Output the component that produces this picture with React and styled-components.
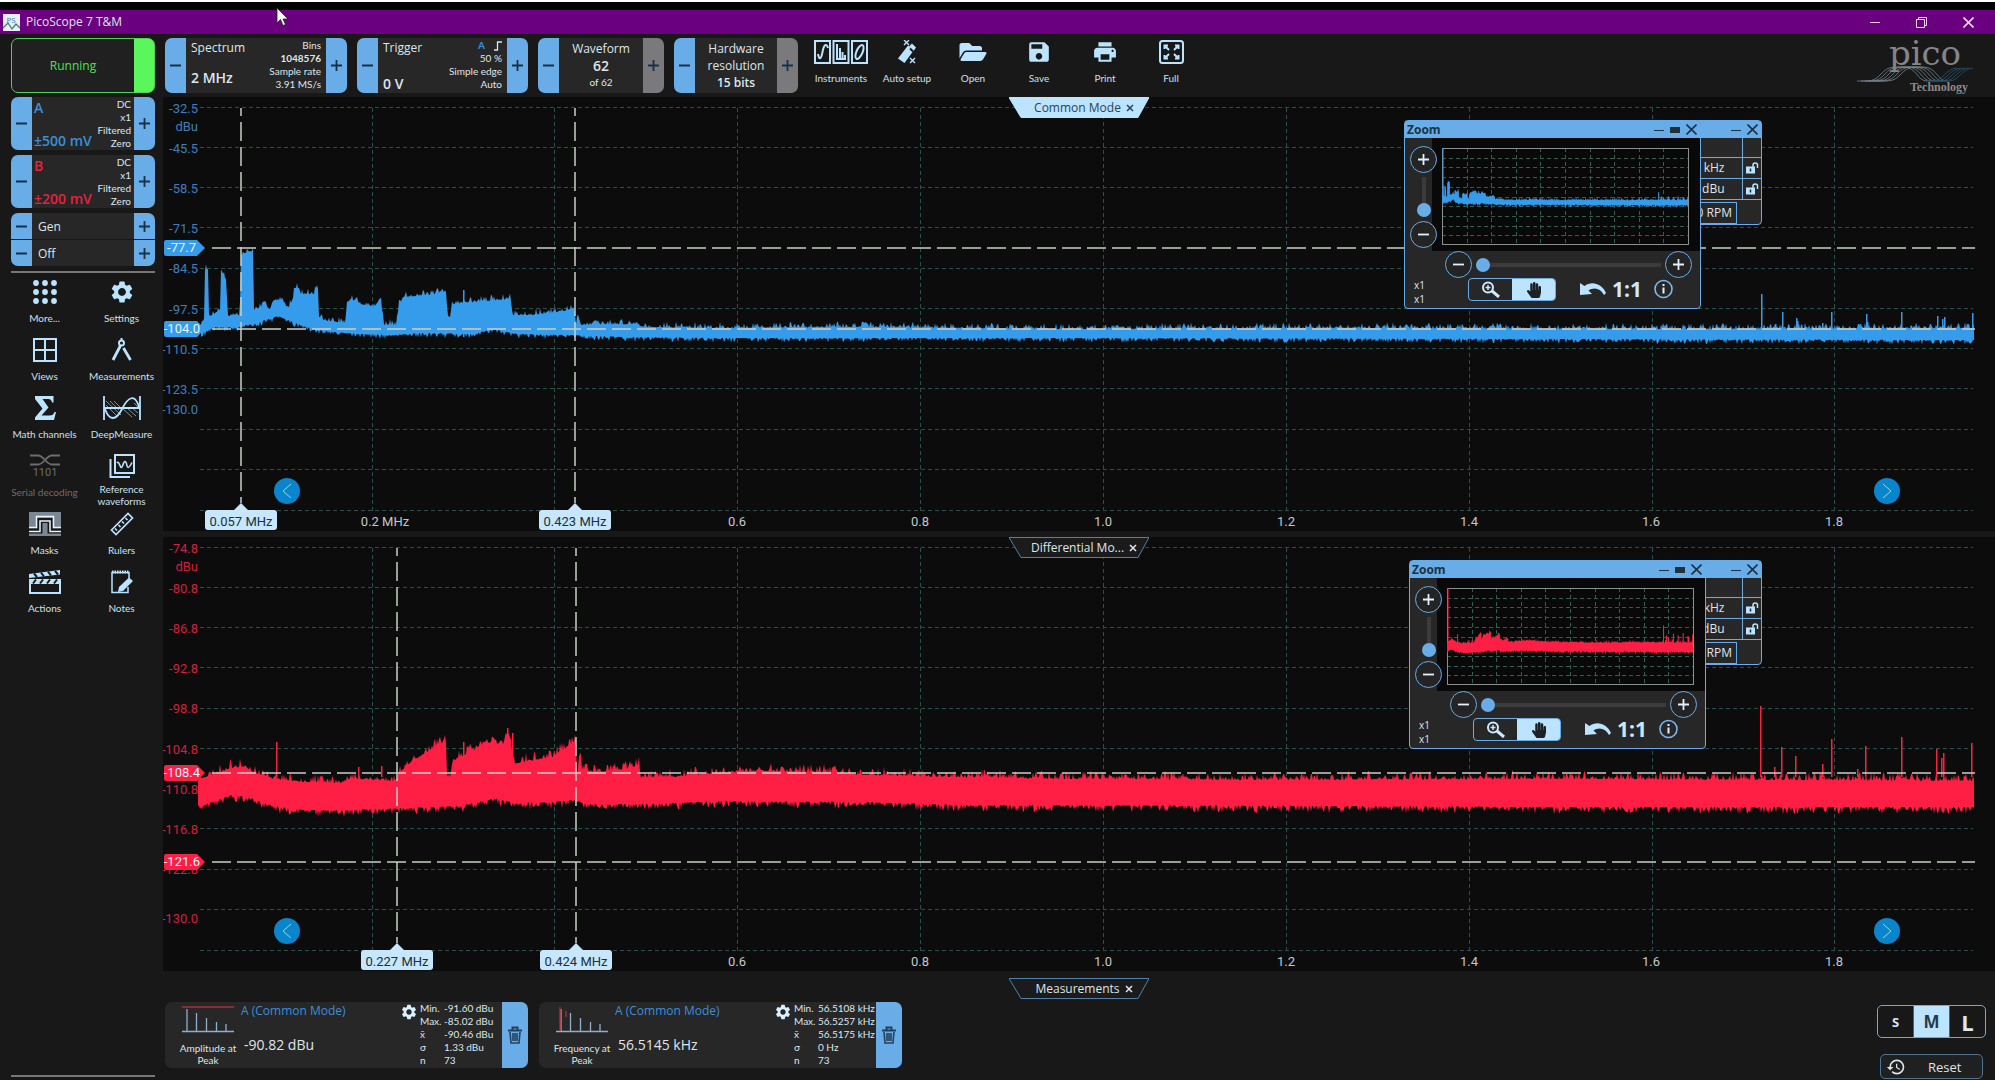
import React, { useState } from 'react';
import styled, { createGlobalStyle, css } from 'styled-components';
import { FaFolderOpen, FaHandPaper } from 'react-icons/fa';
import { MdHistory, MdPrint, MdSave, MdSettings } from 'react-icons/md';

const BLUE = '#349ceb';
const RED = '#ff1f45';

const GlobalStyle = createGlobalStyle`
  :root {
    --bg: #181818;
    --card: #272727;
    --plot: #0c0c0c;
    --accent: #69ade8;
    --pale: #bce4ff;
    --text: #dfe6ec;
    --font-ui: 'Open Sans', 'Noto Sans', sans-serif;
    --font-small: Lato, 'Open Sans', sans-serif;
    --fz-xs: 10px;
    --fz-md: 12px;
    --fz-lg: 14px;
  }

  * {
    box-sizing: border-box;
  }

  body {
    margin: 0;
    background: var(--bg);
    color: var(--text);
    font-family: var(--font-ui);
    font-size: var(--fz-md);
    line-height: 16px;
  }

  button {
    padding: 0;
    border: 0;
    background: none;
    color: inherit;
    font: inherit;
  }

  svg {
    display: block;
  }
`;

/* ---------- trace data ---------- */

// [x, y] pairs in plot units, the plot being 1832 x 434
const upperA = [
  [38, 227], [41, 222], [42, 173], [45, 173], [46, 220], [57, 213], [58, 173], [63, 183],
  [65, 219], [76, 218], [77, 210], [78, 158], [83, 156], [90, 154], [91, 213], [101, 209],
  [107, 212], [110, 204], [120, 204], [125, 212], [130, 202], [131, 191], [136, 191],
  [138, 197], [151, 197], [153, 191], [155, 192], [156, 223], [182, 226], [184, 208],
  [188, 202], [197, 207], [211, 210], [218, 201], [219, 213], [221, 228], [233, 228],
  [236, 208], [241, 200], [268, 198], [282, 195], [283, 197], [285, 220], [287, 220],
  [289, 207], [311, 205], [347, 202], [348, 204], [349, 218], [368, 218], [390, 216],
  [411, 212], [413, 228], [415, 218], [418, 228], [476, 227], [477, 230], [560, 231],
  [700, 230], [900, 232], [1200, 231], [1500, 232], [1812, 231],
];
const lowerA = [
  [38, 236], [41, 235], [50, 230], [72, 230], [90, 227], [115, 219], [133, 226], [154, 233],
  [183, 236], [229, 238], [261, 236], [311, 237], [329, 232], [354, 237], [411, 238],
  [461, 240], [557, 241], [900, 241], [1400, 242], [1812, 243],
];
const upperB = [
  [35, 242], [47, 239], [68, 231], [83, 230], [91, 236], [111, 242], [140, 245], [176, 246],
  [190, 242], [211, 243], [233, 245], [236, 236], [247, 226], [261, 217], [282, 205],
  [283, 207], [284, 240], [287, 240], [290, 224], [311, 213], [322, 206], [340, 207],
  [345, 195], [348, 204], [350, 227], [368, 224], [390, 220], [411, 205], [413, 207],
  [414, 238], [417, 216], [419, 233], [433, 235], [461, 233], [476, 228], [478, 241],
  [511, 240], [557, 236], [600, 234], [652, 235], [700, 238], [780, 240], [900, 242],
  [1100, 243], [1400, 242], [1812, 244],
];
const lowerB = [
  [35, 268], [43, 267], [68, 258], [83, 259], [111, 269], [140, 273], [176, 273], [240, 271],
  [297, 269], [318, 264], [333, 261], [351, 266], [390, 265], [411, 263], [426, 267],
  [476, 267], [557, 264], [700, 265], [800, 268], [1200, 269], [1400, 270], [1812, 270],
];
const spikesA = [
  [300, 193], [1598, 197], [1612, 227], [1619, 215], [1633, 221], [1634, 224], [1659, 226],
  [1668, 215], [1695, 227], [1703, 217], [1704, 225], [1738, 215], [1774, 219], [1779, 222],
  [1781, 220], [1809, 216],
];
const spikesB = [
  [113, 205], [195, 230], [218, 229], [300, 205], [344, 191], [349, 196], [1597, 169],
  [1611, 230], [1618, 210], [1632, 219], [1659, 227], [1668, 202], [1694, 232], [1702, 209],
  [1738, 200], [1773, 212], [1778, 221], [1780, 216], [1808, 206],
];

const rng = seed => {
  let s = seed;
  return () => {
    s = (s * 1664525 + 1013904223) % 4294967296;
    return s / 4294967296;
  };
};

const sample = (points, x) => {
  const i = points.findIndex(p => p[0] >= x);
  if (i <= 0) return points[i === 0 ? 0 : points.length - 1][1];
  const [x0, y0] = points[i - 1];
  const [x1, y1] = points[i];
  return y0 + ((y1 - y0) * (x - x0)) / (x1 - x0);
};

const buildTrace = (upper, lower, spikes, noise, seed) => {
  const rand = rng(seed);
  const jitter = () => rand() ** 3 * noise;
  const top = [];
  const bottom = [];
  for (let x = upper[0][0]; x <= 1811; x += 1) {
    top.push(`${x} ${(sample(upper, x) - jitter()).toFixed(1)}`);
    bottom.unshift(`${x} ${(sample(lower, x) + jitter() * 0.8).toFixed(1)}`);
  }
  const peaks = spikes.map(([x, y]) => `M${x} ${y}H${x + 1.5}V240H${x}Z`).join('');
  return `M${top.join('L')}L${bottom.join('L')}Z${peaks}`;
};

const channels = [
  {
    id: 'common',
    title: 'Common Mode',
    color: BLUE,
    labelColor: '#3f7fb9',
    trace: buildTrace(upperA, lowerA, spikesA, 6, 7),
    labels: [
      ['-32.5', 11], ['dBu', 29], ['-45.5', 51], ['-58.5', 91], ['-71.5', 131], ['-84.5', 171],
      ['-97.5', 212], ['-110.5', 252], ['-123.5', 292], ['-130.0', 312],
    ],
    levels: [['-77.7', 151], ['-104.0', 232]],
    rulers: [['0.057 MHz', 78], ['0.423 MHz', 412]],
    ticks: [['0.2 MHz', 222], ['0.6', 574], ['0.8', 757], ['1.0', 940], ['1.2', 1123], ['1.4', 1306], ['1.6', 1488], ['1.8', 1671]],
  },
  {
    id: 'differential',
    title: 'Differential Mo...',
    color: RED,
    labelColor: '#d01f3f',
    trace: buildTrace(upperB, lowerB, spikesB, 9, 23),
    labels: [
      ['-74.8', 11], ['dBu', 29], ['-80.8', 51], ['-86.8', 91], ['-92.8', 131], ['-98.8', 171],
      ['-104.8', 212], ['-110.8', 252], ['-116.8', 292], ['-122.8', 332], ['-130.0', 381],
    ],
    levels: [['-108.4', 236], ['-121.6', 325]],
    rulers: [['0.227 MHz', 234], ['0.424 MHz', 413]],
    ticks: [['0.6', 574], ['0.8', 757], ['1.0', 940], ['1.2', 1123], ['1.4', 1306], ['1.6', 1488], ['1.8', 1671]],
  },
];

/* ---------- icons ---------- */

const Line = styled.svg.attrs({ fill: 'none', stroke: 'currentColor', strokeWidth: 2 })``;

const RisingEdge = () => (
  <Line width="8" height="10" viewBox="0 0 8 10">
    <path d="M0 9H3.5V1H8" strokeWidth="1.3" />
  </Line>
);

const InstrumentsIcon = () => (
  <Line width="54" height="24" viewBox="0 0 54 24">
    <path d="M1 1h15v22H1zM19.500 1h15v22h-15zM38 1h15v22H38z" />
    <path d="M4 14c1 6 3 6 4.500-2s4-9 5.500-4M23 4v15h9M26 8v11M28.500 12v7M31 15v4" />
    <ellipse cx="45.500" cy="12" rx="3" ry="7.500" transform="rotate(24 45.500 12)" />
  </Line>
);

const AutoSetupIcon = () => (
  <svg width="22" height="24" viewBox="0 0 22 24" fill="currentColor">
    <path d="M12 5.500l6 4.500-9.500 13L2 18.500z" />
    <path d="M16 3.500l4 4-2 3-5-4z" />
    <path d="M14 8.500l3 3" stroke="#181818" strokeWidth="2" />
    <path d="M8 0l5 5M13 0L8 5M14 18l5 5M19 18l-5 5" stroke="currentColor" strokeWidth="1.400" />
  </svg>
);

const FullIcon = () => (
  <Line width="25" height="24" viewBox="0 0 25 24">
    <rect x="1" y="1" width="23" height="22" rx="2.500" />
    <path d="M5.500 9V5.500H9M5.500 5.500l4.500 4.500M16 5.500h3.500V9M19.500 5.500L15 10M5.500 15v3.500H9M5.500 18.500L10 14M19.500 15v3.500H16M19.500 18.500L15 14" />
  </Line>
);

const DotsIcon = () => (
  <svg width="24" height="24" viewBox="0 0 24 24" fill="currentColor">
    {[3, 12, 21].map(y => [3, 12, 21].map(x => <circle key={`${x}-${y}`} cx={x} cy={y} r="2.900" />))}
  </svg>
);

const ViewsIcon = () => (
  <Line width="24" height="24" viewBox="0 0 24 24">
    <path d="M1 1h22v22H1zM12 1v22M1 12h22" />
  </Line>
);

const CompassIcon = () => (
  <Line width="22" height="24" viewBox="0 0 22 24">
    <circle cx="10.500" cy="5" r="2.500" />
    <path d="M10.500 0v2.500" />
    <path d="M9.500 7.500L2 22M12.500 10L19.500 22" strokeWidth="2.800" />
  </Line>
);

const SigmaIcon = () => (
  <svg width="22" height="24" viewBox="0 0 22 24" fill="currentColor">
    <path d="M1 0h18.500v6.500h-1.500c-.500-2.500-1.500-3.500-4-3.500H8.500l6 8.500L7.500 19.500h8c3 0 4-1 5-3.500h1.500L20 24H1v-2.500l7.500-9L1 3z" />
  </svg>
);

const DeepMeasureIcon = () => (
  <Line width="38" height="24" viewBox="0 0 38 24">
    <path d="M3 5l15 14M3 9l11 11M7 5l9 9M11 5l6 6M20 13l9 8M24 12l9 8M28 11l7 6M31 7l5 5" strokeWidth="1" opacity=".6" />
    <path d="M1 0v24M37 0v24M1 12h36" strokeWidth="1.800" />
    <path d="M2 13c4 12 11 12 17 0s13-16 17-2" strokeWidth="1.800" />
  </Line>
);

const SerialIcon = () => (
  <svg width="30" height="24" viewBox="0 0 30 24" fill="none" stroke="currentColor" strokeWidth="1.800">
    <path d="M0 1.500h8c6 0 8 9 14 9h8M0 10.500h8c6 0 8-9 14-9h8" />
    <text x="15" y="22" fill="currentColor" stroke="none" textAnchor="middle" fontFamily="Roboto" fontSize="11">1101</text>
  </svg>
);

const ReferenceIcon = () => (
  <Line width="26" height="24" viewBox="0 0 26 24">
    <path d="M6 1h19v18H6zM1.500 5v18H21" />
    <path d="M8 9c2-3 3 5 4.500 4.500s1.500-6 3.500-6 1.500 6 3 6 3-3 4-5" strokeWidth="1.600" />
  </Line>
);

const MasksIcon = () => (
  <svg width="32" height="24" viewBox="0 0 32 24" fill="none" stroke="#e6f4ff" strokeWidth="1.500">
    <rect width="32" height="24" fill="#7b8894" stroke="none" />
    <path d="M0 15.500h7.500V4.500h17v11H32" />
    <path d="M0 19h11V8.500h10V19h11" stroke="#181818" strokeWidth="5" />
    <path d="M0 19.500h11V9h10v10.500h11" />
  </svg>
);

const RulerIcon = () => (
  <Line width="24" height="24" viewBox="0 0 24 24">
    <path d="M1.500 18L18 1.500 22.500 6 6 22.500zM7 18.500l-2-2M10.500 15l-2-2M14 11.500l-2-2M17.500 8l-2-2" strokeWidth="1.700" />
  </Line>
);

const ClapperIcon = () => (
  <svg width="32" height="24" viewBox="0 0 32 24" fill="currentColor">
    <path d="M0 4L31 0v4.500L0 8zM0 9h32v5H0z" />
    <path d="M5 3.500l3 3.500M12 2.500l3 4M19 1.700l3 3.800M26 .8l3 3.700M4 13.500L7 9.500M11 13.500l3-4M18 13.500l3-4M25 13.500l3-4" stroke="#181818" strokeWidth="2" />
    <path d="M1 13v10h30V13" fill="none" stroke="currentColor" strokeWidth="2" />
  </svg>
);

const NotesIcon = () => (
  <svg width="22" height="24" viewBox="0 0 22 24" fill="none" stroke="currentColor" strokeWidth="1.500">
    <path d="M17 17v5.500H1V2.500h17V8" />
    <path d="M1 2h17" strokeDasharray="1.500 1" strokeWidth="3" />
    <path d="M7 22l1-5L18 7.500l4 3.500-10 10z" fill="currentColor" stroke="none" />
  </svg>
);

const TrashIcon = () => (
  <svg width="14" height="18" viewBox="0 0 14 18" fill="none" stroke="#23415c">
    <path d="M0 4.500h14M4.500 4V1.500h5V4" strokeWidth="2" />
    <path d="M2 6l1 11h8l1-11M5 7v8M7 7v8M9 7v8" strokeWidth="1.600" />
  </svg>
);

const PadlockIcon = () => (
  <svg width="14" height="12" viewBox="0 0 14 12" fill="none">
    <rect x="1" y="4.500" width="9" height="7" fill="#bce4ff" />
    <path d="M8 5V3c0-2.600 4.500-2.600 4.500 0v3" stroke="#bce4ff" strokeWidth="1.500" />
    <path d="M5.500 6.500v3" stroke="#272727" strokeWidth="1.500" />
  </svg>
);

const ZoomInIcon = () => (
  <Line width="19" height="17" viewBox="0 0 19 17">
    <circle cx="7" cy="6.500" r="5" />
    <path d="M7 4v5M4.500 6.500h5" strokeWidth="1.500" />
    <path d="M11 10l7 6" strokeWidth="3" />
  </Line>
);

const UndoIcon = () => (
  <svg width="26" height="22" viewBox="0 -4 26 22" fill="#bce4ff">
    <path d="M0 1v12l12-1-3.500-3.500C14 5 20 6 24 13l2-2C22 2 12-1.500 4.500 4z" />
  </svg>
);

const InfoIcon = () => (
  <svg width="19" height="22" viewBox="0 0 19 22" fill="none" stroke="#7db8e8" strokeWidth="1.600">
    <circle cx="9.500" cy="11" r="8.500" />
    <path d="M9.500 9.500v6M9.500 6v2" stroke="#dff1ff" strokeWidth="2" />
  </svg>
);

const AppIcon = () => (
  <svg width="17" height="17" viewBox="0 0 17 17">
    <rect width="17" height="17" fill="#e8eef2" />
    <text x="8" y="9" textAnchor="middle" fontFamily="Open Sans" fontSize="8" fill="#2f80b8">PS</text>
    <path d="M0 14l5-5 4 6 4-5 4 4" fill="none" stroke="#4c7f78" strokeWidth="1.300" />
  </svg>
);

const PeakIcon = ({ frequency }) => (
  <svg width="52" height="27" viewBox="0 0 52 27" fill="none" stroke="#8fb0cc" strokeWidth="1.300">
    <path d="M0 25.500h52M5 3v22M14.500 7v18M24.500 12v13M34.500 16v9M44 18v7" />
    <path d={frequency ? 'M4 1v24M10 5v6' : 'M0 1h52'} stroke="#b52b3a" />
  </svg>
);

const Logo = () => (
  <svg width="126" height="58" viewBox="0 0 126 58" fill="none" role="img" aria-label="pico Technology">
    {[0, 4, 8, 12, 16, 20].map(n => (
      <path key={n} d={`M${2 + n} 43h10c14 0 14-14 28-14h8c14 0 14 14 24 14`} stroke="#77858c" strokeWidth=".8" />
    ))}
    {[0, 4, 8, 12, 16].map(n => (
      <path key={n} d={`M${70 + n} 43h8c10 0 12-12 24-13`} stroke="#2a5468" strokeWidth=".8" />
    ))}
    <text x="70" y="27" textAnchor="middle" fontFamily="DejaVu Serif" fontSize="34" fill="#858585">pico</text>
    <text x="84" y="53" textAnchor="middle" fontFamily="Liberation Serif" fontWeight="700" fontSize="12" fill="#8b8b8b">Technology</text>
  </svg>
);

/* ---------- window frame ---------- */

const Page = styled.div`
  display: flex;
  flex-direction: column;
  min-height: 100vh;
  border-top: 2px solid #fff;
`;

const TitleBar = styled.header`
  display: flex;
  align-items: center;
  gap: 6px;
  height: 32px;
  padding: 0 3px;
  border-top: 8px solid #000;
  background: #6a0080;
`;

const WindowButtons = styled.div`
  display: flex;
  margin-left: auto;

  button {
    display: grid;
    place-items: center;
    width: 47px;
    height: 22px;
    color: #f0d8f4;
  }
`;

const Pointer = styled.svg`
  position: absolute;
  top: 7px;
  left: 276px;
`;

/* ---------- top bar ---------- */

const TopBar = styled.div`
  display: flex;
  gap: 10px;
  height: 63px;
  padding: 4px 14px 4px 11px;
`;

const Running = styled.button`
  width: 144px;
  padding-right: 20px;
  border: 1px solid #4fd353;
  border-radius: 7px;
  background: linear-gradient(to left, #5af75c 20px, #202020 20px);
  color: #4fe054;
`;

const Control = styled.div`
  display: flex;
  width: ${({ $width }) => $width}px;
  height: ${({ $height }) => $height || 55}px;
  overflow: hidden;
  border-radius: 7px;
  background: var(--card);
`;

const Step = styled.button`
  display: grid;
  flex: 0 0 21px;
  place-items: center;
  background: ${({ $off }) => ($off ? '#7a7a7d' : 'var(--accent)')};
  color: #16324a;
`;

const Sign = ({ plus }) => (
  <svg width="11" height="11" viewBox="0 0 11 11" stroke="currentColor" strokeWidth="1.800">
    <path d={plus ? 'M0 5.500h11M5.500 0v11' : 'M0 5.500h11'} />
  </svg>
);

const ControlBody = styled.div`
  display: flex;
  flex: 1;
  justify-content: space-between;
  min-width: 0;
  padding: ${({ $tight }) => ($tight ? '0 3px 0 2px' : '0 5px')};
`;

const Setting = styled.div`
  display: flex;
  flex-direction: column;
  justify-content: space-between;
  padding: ${({ $foot }) => `2px 0 ${$foot || 0}px`};
  color: ${({ $color }) => $color || 'inherit'};
  white-space: nowrap;

  strong {
    font-size: var(--fz-lg);
    font-weight: 600;
    line-height: 18px;
  }
`;

const Details = styled.div`
  display: flex;
  flex-direction: column;
  align-items: flex-end;
  padding-top: 1px;
  font-family: var(--font-small);
  font-size: var(--fz-xs);
  line-height: 13px;
  white-space: nowrap;

  span {
    display: flex;
    align-items: center;
    gap: 9px;
    height: 13px;
  }
`;

const Source = styled.em`
  color: #3b8fdb;
  font-style: normal;
  font-weight: 700;
`;

const Centered = styled.div`
  display: flex;
  flex: 1;
  flex-direction: column;
  align-items: center;
  justify-content: center;
  line-height: 17px;

  strong {
    font-weight: 600;
    font-size: ${({ $big }) => ($big ? '14px' : '12px')};
  }

  small {
    font-family: var(--font-small);
    font-size: var(--fz-xs);
  }
`;

const Tools = styled.nav`
  display: flex;
`;

const Tool = styled.button`
  display: flex;
  flex-direction: column;
  align-items: center;
  gap: 5px;
  width: ${({ $width }) => $width}px;
  height: 58px;
  padding-top: ${({ $top }) => $top || 0}px;
  color: ${({ disabled }) => (disabled ? '#6d6d6d' : 'var(--pale)')};
  font-family: var(--font-small);
  font-size: var(--fz-xs);
  line-height: 12px;

  > svg {
    flex: 0 0 24px;
  }

  span {
    display: grid;
    align-items: center;
    min-height: 18px;
    color: ${({ disabled }) => (disabled ? '#6d6d6d' : '#cfe0ec')};
  }
`;

const LogoSlot = styled.div`
  margin-left: auto;
`;

/* ---------- sidebar ---------- */

const Main = styled.div`
  display: grid;
  flex: 1;
  grid-template-columns: 163px minmax(0, 1fr);
`;

const Sidebar = styled.aside`
  display: flex;
  flex-direction: column;
  gap: 5px;
  padding: 0 8px 3px 11px;

  hr {
    width: 100%;
    margin: 0;
    border: 0;
    border-top: 2px solid #777;
  }

  hr:last-child {
    margin-top: auto;
  }
`;

const Generator = styled.div`
  display: grid;
  gap: 1px;
  width: 144px;
  overflow: hidden;
  border-radius: 7px;
`;

const GenRow = styled.div`
  display: flex;
  height: 26px;
  background: var(--card);

  span {
    flex: 1;
    padding: 6px;
    line-height: 16px;
  }
`;

const ToolGrid = styled.nav`
  display: grid;
  grid-template-columns: 77px 77px;
  margin-left: -5px;
  padding-top: 2px;
`;

/* ---------- plots ---------- */

const Workspace = styled.main`
  display: flex;
  flex-direction: column;
  gap: 6px;
`;

const PlotFrame = styled.section`
  position: relative;
  background: var(--plot);

  > svg {
    width: 100%;
    height: auto;
  }
`;

const TabShape = styled.div`
  position: relative;
  display: flex;
  align-items: center;
  justify-content: center;
  gap: 5px;
  width: 140px;
  height: 21px;
  padding-left: 10px;
  color: ${({ $active }) => ($active ? '#24435c' : 'var(--text)')};
  white-space: nowrap;

  > svg:first-child {
    position: absolute;
    inset: 0;
    z-index: -1;
  }

  ${({ $overlay }) =>
    $overlay &&
    css`
      position: absolute;
      top: 0;
      left: 50%;
      z-index: 0;
      transform: translateX(-50%);
    `}
`;

const Pager = styled.button`
  position: absolute;
  top: 381px;
  ${({ $side }) => ($side === 'left' ? 'left: 111px' : 'right: 95px')};
  display: grid;
  place-items: center;
  width: 26px;
  height: 26px;
  border-radius: 50%;
  background: #0a84cc;
  color: #8fe0c0;
`;

const Tab = ({ title, active, overlay }) => (
  <TabShape $active={active} $overlay={overlay}>
    <svg width="140" height="21" viewBox="0 0 140 21">
      <path d="M0 .5H140L129 20.500H12Z" fill={active ? '#bce4ff' : '#1b1b1b'} stroke={active ? '#bce4ff' : '#4b83b0'} />
    </svg>
    <span>{title}</span>
    <button aria-label={`Close ${title}`}>
      <svg width="8" height="8" viewBox="0 0 8 8" stroke="currentColor" strokeWidth="1.500">
        <path d="M1 1l6 6M7 1L1 7" />
      </svg>
    </button>
  </TabShape>
);

const gridX = [209, 391, 574, 757, 940, 1123, 1306, 1489, 1671];
const gridY = [11, 51, 91, 131, 172, 212, 252, 292, 333, 373, 414];

const Plot = ({ color, labelColor, trace, labels, levels, rulers, ticks }) => (
  <svg viewBox="0 0 1832 434" fontFamily="Roboto" fontSize="13">
    <g stroke="#28504a" strokeDasharray="4 3">
      {gridX.map(x => <path key={x} d={`M${x}.5 11V414`} />)}
      {gridY.map(y => <path key={y} d={`M37 ${y - 0.5}H1810`} />)}
    </g>
    <g fill={labelColor} textAnchor="end">
      {labels.map(([text, y]) => <text key={text} x="35" y={y + 5}>{text}</text>)}
    </g>
    <path d={trace} fill={color} />
    <g stroke="#c9cec6" strokeWidth="1.500" strokeDasharray="19 6">
      {levels.map(([text, y]) => <path key={text} d={`M49 ${y}H1812`} />)}
      {rulers.map(([text, x]) => <path key={text} d={`M${x} 11V406`} strokeDashoffset="11" />)}
    </g>
    {levels.map(([text, y]) => (
      <g key={text}>
        <path d={`M3 ${y - 8}h31l8 8-8 8H3q-2 0-2-2v-12q0-2 2-2z`} fill={color} />
        <text x={text.length > 5 ? 37 : 33} y={y + 4} fill="#e8f4ff" textAnchor="end">{text}</text>
      </g>
    ))}
    <g fill="#c4c8cb" textAnchor="middle">
      {ticks.map(([text, x]) => <text key={text} x={x} y="429">{text}</text>)}
    </g>
    {rulers.map(([text, x]) => (
      <g key={text}>
        <path d={`M${x - 7} 413l7-7 7 7h26q3 0 3 3v14q0 3-3 3h-66q-3 0-3-3v-14q0-3 3-3z`} fill="#c6e7fd" />
        <text x={x} y="429" fill="#1a2f40" textAnchor="middle">{text}</text>
      </g>
    ))}
  </svg>
);

/* ---------- floating windows ---------- */

const floating = css`
  position: absolute;
  top: 23px;
  border: 1px solid var(--accent);
  border-radius: 4px;
  background: var(--card);
`;

const FloatTitle = styled.div`
  display: flex;
  align-items: center;
  gap: 6px;
  height: 17px;
  padding: 0 3px 0 2px;
  background: var(--accent);
  color: #1b3146;
  font-weight: 700;
  line-height: 16px;

  span {
    flex: 1;
  }
`;

const RulerWindow = styled.div`
  ${floating};
  right: 233px;
  width: 160px;
  height: 105px;
`;

const RulerTable = styled.table`
  width: 100%;
  border-collapse: collapse;

  td {
    height: 21px;
    padding: 0 17px 0 0;
    border: 1px solid var(--accent);
    border-left: 0;
    text-align: right;
    line-height: 16px;
  }

  tr:first-child td {
    height: 19px;
    border-top: 0;
  }

  td:last-child {
    width: 19px;
    padding: 0 2px;
    border-right: 0;
  }
`;

const Rpm = styled.div`
  width: 134px;
  height: 22px;
  margin-top: 2px;
  padding: 2px 4px;
  border: 1px solid var(--accent);
  text-align: right;
`;

const ZoomWindow = styled.div`
  ${floating};
  right: ${({ $right }) => $right}px;
  width: 297px;
  height: 189px;
`;

const ZoomTop = styled.div`
  display: flex;
  height: 113px;
`;

const ZoomSide = styled.div`
  z-index: 1;
  display: flex;
  flex: 0 0 27px;
  flex-direction: column;
  gap: 4px;
  min-width: 0;
  padding: 8px 0 0 5px;
`;

const ZoomCanvas = styled.div`
  flex: 1;
  min-width: 0;
  padding: 10px;
  background: #090909;

  > svg {
    width: 247px;
    height: 97px;
  }
`;

const Round = styled.button`
  display: grid;
  flex: none;
  place-items: center;
  width: 27px;
  height: 27px;
  border: 1px solid var(--accent);
  border-radius: 50%;
  background: #242424;
  color: #e2f3ff;
`;

const Slider = styled.input.attrs({ type: 'range' })`
  appearance: none;
  margin: 0;
  background: transparent;

  ${({ $vertical }) =>
    $vertical
      ? css`
          width: 27px;
          height: 40px;
          writing-mode: vertical-lr;
          direction: rtl;
        `
      : css`
          flex: 1;
          min-width: 0;
        `}

  &::-webkit-slider-runnable-track {
    ${({ $vertical }) => ($vertical ? 'width: 4px' : 'height: 4px')};
    background: #3b3b3b;
  }

  &::-webkit-slider-thumb {
    appearance: none;
    width: 14px;
    height: 14px;
    ${({ $vertical }) => ($vertical ? 'margin-left: -5px' : 'margin-top: -5px')};
    border-radius: 50%;
    background: var(--accent);
  }
`;

const ZoomRow = styled.div`
  display: flex;
  align-items: center;
  gap: 4px;
  padding: 0 8px 0 40px;
`;

const ZoomActions = styled.div`
  display: flex;
  align-items: flex-start;
  padding-left: 9px;
`;

const Factor = styled.div`
  width: 54px;
  font-size: var(--fz-xs);
  line-height: 14px;
`;

const Modes = styled.div`
  display: flex;
  width: 88px;
  height: 23px;
  margin-right: 24px;
  overflow: hidden;
  border: 1px solid var(--accent);
  border-radius: 4px;

  button {
    display: grid;
    flex: 1;
    place-items: center;
    color: #cfeaff;
  }

  button[aria-pressed='true'] {
    background: var(--pale);
    color: #1c2126;
  }
`;

const OneToOne = styled.button`
  margin: 0 12px 0 6px;
  color: #cfeaff;
  font-size: 21px;
  font-weight: 700;
  line-height: 22px;
`;

const Dash = () => <svg width="10" height="10" viewBox="0 0 10 10" stroke="currentColor"><path d="M0 5.500h10" /></svg>;
const Cross = () => (
  <svg width="11" height="11" viewBox="0 0 11 11" stroke="currentColor" strokeWidth="1.600">
    <path d="M.5 .5l10 10M10.500 .5l-10 10" />
  </svg>
);

const ZoomPanel = ({ right, color, trace }) => {
  const [mode, setMode] = useState('pan');

  return (
    <ZoomWindow $right={right}>
      <FloatTitle>
        <span>Zoom</span>
        <button aria-label="Minimise"><Dash /></button>
        <button aria-label="Dock"><svg width="10" height="6"><rect width="10" height="6" fill="#22303c" /></svg></button>
        <button aria-label="Close"><Cross /></button>
      </FloatTitle>
      <ZoomTop>
        <ZoomSide>
          <Round aria-label="Zoom in vertically"><Sign plus /></Round>
          <Slider $vertical aria-label="Vertical zoom" defaultValue="0" />
          <Round aria-label="Zoom out vertically"><Sign /></Round>
        </ZoomSide>
        <ZoomCanvas>
          <svg viewBox="0 0 247 97">
            <g stroke="#2c6150" strokeDasharray="4 3">
              {[1, 2, 3, 4, 5, 6, 7, 8, 9].map(n => (
                <path key={n} d={`M${Math.round(n * 24.6)}.5 0V97M0 ${Math.round(n * 9.7)}.5H247`} />
              ))}
            </g>
            <rect x=".5" y=".5" width="246" height="96" fill="none" stroke="#8b918f" />
            <path d="M1 0v56" stroke={color} />
            <svg width="246" height="97" viewBox="37 10 1773 403" preserveAspectRatio="none">
              <path d={trace} fill={color} stroke={color} strokeWidth="6" />
            </svg>
          </svg>
        </ZoomCanvas>
      </ZoomTop>
      <ZoomRow>
        <Round aria-label="Zoom out horizontally"><Sign /></Round>
        <Slider aria-label="Horizontal zoom" defaultValue="0" />
        <Round aria-label="Zoom in horizontally"><Sign plus /></Round>
      </ZoomRow>
      <ZoomActions>
        <Factor>x1<br />x1</Factor>
        <Modes>
          <button aria-label="Zoom" aria-pressed={mode === 'zoom'} onClick={() => setMode('zoom')}><ZoomInIcon /></button>
          <button aria-label="Pan" aria-pressed={mode === 'pan'} onClick={() => setMode('pan')}><FaHandPaper size={16} /></button>
        </Modes>
        <button aria-label="Undo zoom"><UndoIcon /></button>
        <OneToOne>1:1</OneToOne>
        <button aria-label="Information"><InfoIcon /></button>
      </ZoomActions>
    </ZoomWindow>
  );
};

const RulerPanel = () => (
  <RulerWindow>
    <FloatTitle>
      <span />
      <button aria-label="Minimise rulers"><Dash /></button>
      <button aria-label="Close rulers"><Cross /></button>
    </FloatTitle>
    <RulerTable>
      <tbody>
        <tr><td /><td /></tr>
        <tr><td>kHz</td><td><PadlockIcon /></td></tr>
        <tr><td>dBu</td><td><PadlockIcon /></td></tr>
      </tbody>
    </RulerTable>
    <Rpm>0 RPM</Rpm>
  </RulerWindow>
);

/* ---------- measurements ---------- */

const Bottom = styled.section`
  display: flex;
  flex-direction: column;
  align-items: center;
  padding-top: 1px;
  isolation: isolate;
`;

const BottomRow = styled.div`
  display: flex;
  align-items: flex-start;
  gap: 11px;
  width: 100%;
  padding: 3px 9px 0 2px;
`;

const Card = styled.article`
  display: grid;
  grid-template-columns: 76px 1fr 20px 82px 26px;
  width: 363px;
  height: 66px;
  overflow: hidden;
  border-radius: 7px;
  background: var(--card);
`;

const CardKind = styled.div`
  display: flex;
  flex-direction: column;
  align-items: center;
  gap: 9px;
  padding: 4px 0 0 10px;
  font-family: var(--font-small);
  font-size: var(--fz-xs);
  line-height: 12px;
  text-align: center;
  white-space: nowrap;
`;

const CardValue = styled.div`
  display: flex;
  flex-direction: column;
  gap: 18px;
  padding-top: 1px;
  white-space: nowrap;

  h3 {
    margin: 0;
    color: #3b8fdb;
    font-size: var(--fz-md);
    font-weight: 400;
    line-height: 16px;
  }

  strong {
    padding-left: 3px;
    font-size: var(--fz-lg);
    font-weight: 400;
  }
`;

const Gear = styled.button`
  align-self: start;
  padding-top: 1px;
  color: #d8f0ff;
`;

const Stats = styled.table`
  align-self: start;
  border-collapse: collapse;
  font-family: var(--font-small);
  font-size: var(--fz-xs);
  line-height: 13px;
  white-space: nowrap;

  th,
  td {
    height: 13px;
    padding: 0;
    text-align: left;
    font-weight: 400;
  }

  th {
    width: 24px;
  }
`;

const Delete = styled.button`
  display: grid;
  place-items: center;
  background: var(--accent);
`;

const SizeColumn = styled.div`
  display: flex;
  flex-direction: column;
  align-items: flex-end;
  gap: 16px;
  margin-left: auto;
  padding-top: 3px;
`;

const Sizes = styled.fieldset`
  display: flex;
  width: 109px;
  height: 33px;
  margin: 0;
  padding: 0;
  overflow: hidden;
  border: 1px solid var(--accent);
  border-radius: 5px;
`;

const Size = styled.label`
  display: grid;
  flex: 1;
  place-items: center;
  font-size: ${({ $size }) => $size}px;
  font-weight: 700;

  & + & {
    border-left: 1px solid #3f6585;
  }

  &:has(input:checked) {
    background: var(--pale);
    color: #25394a;
  }

  input {
    position: absolute;
    appearance: none;
    margin: 0;
  }
`;

const Reset = styled.button`
  display: flex;
  align-items: center;
  gap: 22px;
  width: 103px;
  height: 25px;
  margin-right: 3px;
  padding-left: 5px;
  border: 1px solid #4b7598;
  border-radius: 5px;
  background: #202020;
  font-size: 13px;
`;

const measurements = [
  {
    kind: 'Amplitude at',
    value: '-90.82 dBu',
    stats: [['Min.', '-91.60 dBu'], ['Max.', '-85.02 dBu'], ['x̄', '-90.46 dBu'], ['σ', '1.33 dBu'], ['n', '73']],
  },
  {
    kind: 'Frequency at',
    value: '56.5145 kHz',
    stats: [['Min.', '56.5108 kHz'], ['Max.', '56.5257 kHz'], ['x̄', '56.5175 kHz'], ['σ', '0 Hz'], ['n', '73']],
  },
];

const toolbar = [
  ['Instruments', <InstrumentsIcon />],
  ['Auto setup', <AutoSetupIcon />],
  ['Open', <FaFolderOpen size={28} />],
  ['Save', <MdSave size={30} viewBox="1 1 22 22" />],
  ['Print', <MdPrint size={28} viewBox="1 1 22 22" />],
  ['Full', <FullIcon />],
];

const sideTools = [
  ['More...', <DotsIcon />],
  ['Settings', <MdSettings size={28} viewBox="1 1 22 22" />],
  ['Views', <ViewsIcon />],
  ['Measurements', <CompassIcon />],
  ['Math channels', <SigmaIcon />],
  ['DeepMeasure', <DeepMeasureIcon />],
  ['Serial decoding', <SerialIcon />, true],
  ['Reference waveforms', <ReferenceIcon />],
  ['Masks', <MasksIcon />],
  ['Rulers', <RulerIcon />],
  ['Actions', <ClapperIcon />],
  ['Notes', <NotesIcon />],
];

const Channel = ({ name, range, color }) => (
  <Control $width={144} $height={53}>
    <Step aria-label={`Decrease ${name} range`}><Sign /></Step>
    <ControlBody $tight>
      <Setting $color={color}>
        <strong>{name}</strong>
        <strong>{range}</strong>
      </Setting>
      <Details>
        <span>DC</span>
        <span>x1</span>
        <span>Filtered</span>
        <span>Zero</span>
      </Details>
    </ControlBody>
    <Step aria-label={`Increase ${name} range`}><Sign plus /></Step>
  </Control>
);

const App = () => {
  const [size, setSize] = useState('M');

  return (
    <>
      <GlobalStyle />
      <Page>
        <TitleBar>
          <AppIcon />
          <span>PicoScope 7 T&amp;M</span>
          <WindowButtons>
            <button aria-label="Minimise"><Dash /></button>
            <button aria-label="Restore">
              <svg width="11" height="11" viewBox="0 0 11 11" fill="none" stroke="currentColor">
                <path d="M.5 2.500h8v8h-8zM2.500 2.500v-2h8v8h-2" />
              </svg>
            </button>
            <button aria-label="Close"><Cross /></button>
          </WindowButtons>
        </TitleBar>
        <Pointer width="13" height="20" viewBox="0 0 13 20" fill="#fff" stroke="#222" strokeWidth=".8">
          <path d="M1 1v15l3.500-3.500L7 18.500l2.500-1L7 12h5z" />
        </Pointer>

        <TopBar>
          <Running>Running</Running>
          <Control $width={182}>
            <Step aria-label="Decrease span"><Sign /></Step>
            <ControlBody>
              <Setting $foot={6}><span>Spectrum</span><strong>2 MHz</strong></Setting>
              <Details>
                <span>Bins</span>
                <b>1048576</b>
                <span>Sample rate</span>
                <span>3.91 MS/s</span>
              </Details>
            </ControlBody>
            <Step aria-label="Increase span"><Sign plus /></Step>
          </Control>
          <Control $width={171}>
            <Step aria-label="Decrease threshold"><Sign /></Step>
            <ControlBody>
              <Setting><span>Trigger</span><strong>0 V</strong></Setting>
              <Details>
                <span><Source>A</Source><RisingEdge /></span>
                <span>50 %</span>
                <span>Simple edge</span>
                <span>Auto</span>
              </Details>
            </ControlBody>
            <Step aria-label="Increase threshold"><Sign plus /></Step>
          </Control>
          <Control $width={126}>
            <Step aria-label="Previous waveform"><Sign /></Step>
            <Centered $big><span>Waveform</span><strong>62</strong><small>of 62</small></Centered>
            <Step $off disabled aria-label="Next waveform"><Sign plus /></Step>
          </Control>
          <Control $width={124}>
            <Step aria-label="Decrease resolution"><Sign /></Step>
            <Centered><span>Hardware</span><span>resolution</span><strong>15 bits</strong></Centered>
            <Step $off disabled aria-label="Increase resolution"><Sign plus /></Step>
          </Control>
          <Tools>
            {toolbar.map(([label, icon]) => (
              <Tool key={label} $width={66} $top={2}>{icon}<span>{label}</span></Tool>
            ))}
          </Tools>
          <LogoSlot><Logo /></LogoSlot>
        </TopBar>

        <Main>
          <Sidebar>
            <Channel name="A" range="±500 mV" color="#3b8fdb" />
            <Channel name="B" range="±200 mV" color="#e6213f" />
            <Generator>
              {['Gen', 'Off'].map(label => (
                <GenRow key={label}>
                  <Step aria-label={`Previous ${label}`}><Sign /></Step>
                  <span>{label}</span>
                  <Step aria-label={`Next ${label}`}><Sign plus /></Step>
                </GenRow>
              ))}
            </Generator>
            <hr />
            <ToolGrid>
              {sideTools.map(([label, icon, disabled]) => (
                <Tool key={label} $width={77} disabled={disabled}>{icon}<span>{label}</span></Tool>
              ))}
            </ToolGrid>
            <hr />
          </Sidebar>

          <Workspace>
            {channels.map(({ id, title, ...plot }, i) => (
              <PlotFrame key={id}>
                <Plot {...plot} />
                <Tab title={title} active={i === 0} overlay />
                <Pager $side="left" aria-label="Previous">
                  <svg width="10" height="16" viewBox="0 0 10 16" fill="none" stroke="currentColor"><path d="M9 1L1 8l8 7" /></svg>
                </Pager>
                <Pager $side="right" aria-label="Next">
                  <svg width="10" height="16" viewBox="0 0 10 16" fill="none" stroke="currentColor"><path d="M1 1l8 7-8 7" /></svg>
                </Pager>
                <RulerPanel />
                <ZoomPanel right={i === 0 ? 294 : 289} color={plot.color} trace={plot.trace} />
              </PlotFrame>
            ))}

            <Bottom>
              <Tab title="Measurements" />
              <BottomRow>
                {measurements.map(({ kind, value, stats }, i) => (
                  <Card key={kind}>
                    <CardKind><PeakIcon frequency={i === 1} /><span>{kind}<br />Peak</span></CardKind>
                    <CardValue><h3>A (Common Mode)</h3><strong>{value}</strong></CardValue>
                    <Gear aria-label="Measurement settings"><MdSettings size={18} /></Gear>
                    <Stats>
                      <tbody>
                        {stats.map(([name, number]) => (
                          <tr key={name}><th scope="row">{name}</th><td>{number}</td></tr>
                        ))}
                      </tbody>
                    </Stats>
                    <Delete aria-label="Delete measurement"><TrashIcon /></Delete>
                  </Card>
                ))}
                <SizeColumn>
                  <Sizes aria-label="Text size">
                    {[['S', 13], ['M', 17], ['L', 22]].map(([name, px]) => (
                      <Size key={name} $size={px}>
                        <input type="radio" name="size" checked={size === name} onChange={() => setSize(name)} />
                        {name}
                      </Size>
                    ))}
                  </Sizes>
                  <Reset><MdHistory size={20} />Reset</Reset>
                </SizeColumn>
              </BottomRow>
            </Bottom>
          </Workspace>
        </Main>
      </Page>
    </>
  );
};

export default App;
